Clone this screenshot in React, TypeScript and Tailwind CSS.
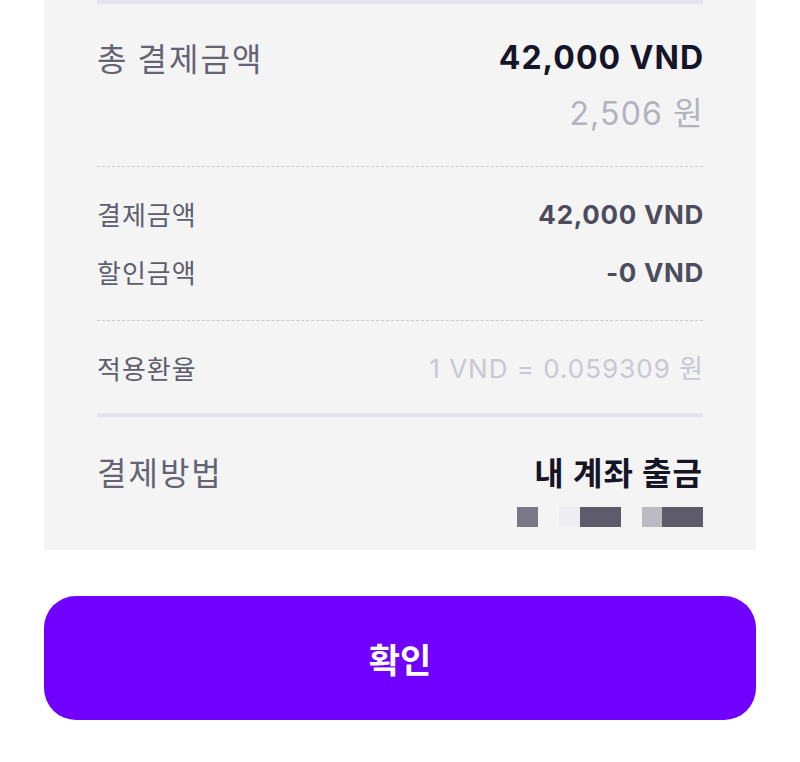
import React from "react";

const font = { fontFamily: 'Inter, "Noto Sans CJK KR", sans-serif' };
const ko = { fontFamily: '"Noto Sans CJK KR", sans-serif' };

export default function App() {
  return (
    <div className="w-[800px] h-[762px] bg-white overflow-hidden" style={font}>
      <div className="mx-[44px] w-[712px] bg-[#f4f4f5] px-[53px] pb-[23px]">
        <div className="h-[4px] bg-[#e4e3ef]" />
        <div className="mt-[33px] flex items-center justify-between h-[40px]">
          <span className="text-[32px] text-[#646373] tracking-[2px]" style={ko}>총 결제금액</span>
          <span className="text-[32px] font-bold text-[#161427] tracking-[1px] -mr-[1px] translate-y-[1px]">42,000 VND</span>
        </div>
        <div className="mt-[16px] flex justify-end items-center h-[40px]">
          <span className="text-[32px] text-[#b3b2be] tracking-[1.2px] -mr-[1px] translate-y-[1px]">2,506 원</span>
        </div>
        <div className="mt-[33px] border-t border-dashed border-[#c9c9d0]" />
        <div className="mt-[30px] flex items-center justify-between h-[32px]">
          <span className="text-[26px] text-[#5f5e6d] tracking-[1px]" style={ko}>결제금액</span>
          <span className="text-[26px] font-bold text-[#4d4c5c] tracking-[0.7px] -mr-[1px] translate-y-[1px]">42,000 VND</span>
        </div>
        <div className="mt-[26px] flex items-center justify-between h-[32px]">
          <span className="text-[26px] text-[#5f5e6d] tracking-[1px]" style={ko}>할인금액</span>
          <span className="text-[26px] font-bold text-[#4d4c5c] tracking-[0.7px] -mr-[1px] translate-y-[1px]">-0 VND</span>
        </div>
        <div className="mt-[33px] border-t border-dashed border-[#c9c9d0]" />
        <div className="mt-[30px] flex items-center justify-between h-[32px]">
          <span className="text-[26px] text-[#5f5e6d] tracking-[1px]" style={ko}>적용환율</span>
          <span className="text-[26px] text-[#c9c8d2] tracking-[1px] -mr-[1px] translate-y-[1px]">1 VND = 0.059309 원</span>
        </div>
        <div className="mt-[30px] h-[4px] bg-[#e3e2ed]" />
        <div className="mt-[34px] flex items-center justify-between h-[40px]">
          <span className="text-[32px] text-[#646373] tracking-[2px]" style={ko}>결제방법</span>
          <span className="text-[32px] font-bold text-[#161427] tracking-[1px]" style={ko}>내 계좌 출금</span>
        </div>
        <div className="mt-[16px] flex justify-end h-[20px]">
          <div className="w-[21px] bg-[#7a7887]" />
          <div className="w-[21px]" />
          <div className="w-[21px] bg-[#eeeef2]" />
          <div className="w-[41px] bg-[#5e5b6b]" />
          <div className="w-[21px]" />
          <div className="w-[20px] bg-[#bbbac2]" />
          <div className="w-[41px] bg-[#5e5b6b]" />
        </div>
      </div>
      <div className="mx-[44px] mt-[46px] w-[712px] h-[124px] rounded-[32px] bg-[#7000ff] flex items-center justify-center">
        <span className="text-[34px] font-bold text-white" style={ko}>확인</span>
      </div>
    </div>
  );
}
